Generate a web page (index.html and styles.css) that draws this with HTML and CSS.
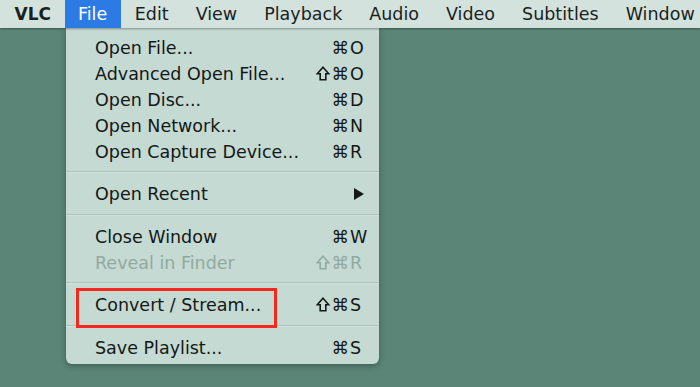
FILE: index.html
```html
<!DOCTYPE html>
<html>
<head>
<meta charset="utf-8">
<link rel="stylesheet" href="styles.css">
</head>
<body>
<div class="screen">
  <div class="menubar">
    <span class="mb-item app">VLC</span>
    <span class="mb-item active">File</span>
    <span class="mb-item">Edit</span>
    <span class="mb-item">View</span>
    <span class="mb-item">Playback</span>
    <span class="mb-item">Audio</span>
    <span class="mb-item">Video</span>
    <span class="mb-item">Subtitles</span>
    <span class="mb-item">Window</span>
  </div>
  <div class="desktop">
    <div class="menu">
      <div class="row"><span class="label">Open File...</span><span class="sc"><span class="mod">⌘</span><span class="key">O</span></span></div>
      <div class="row"><span class="label">Advanced Open File...</span><span class="sc"><span class="mod"><svg class="shift" viewBox="0 0 14 15"><path d="M7 1.2 L12.8 7.8 H9.8 V13.8 H4.2 V7.8 H1.2 Z"/></svg>⌘</span><span class="key">O</span></span></div>
      <div class="row"><span class="label">Open Disc...</span><span class="sc"><span class="mod">⌘</span><span class="key">D</span></span></div>
      <div class="row"><span class="label">Open Network...</span><span class="sc"><span class="mod">⌘</span><span class="key">N</span></span></div>
      <div class="row"><span class="label">Open Capture Device...</span><span class="sc"><span class="mod">⌘</span><span class="key">R</span></span></div>
      <div class="sep"></div>
      <div class="row"><span class="label">Open Recent</span><span class="sc"><span class="mod"></span><span class="key"><svg class="arrow" viewBox="0 0 10 12"><path d="M0 0 L10 6 L0 12 Z"/></svg></span></span></div>
      <div class="sep"></div>
      <div class="row"><span class="label">Close Window</span><span class="sc"><span class="mod">⌘</span><span class="key">W</span></span></div>
      <div class="row disabled"><span class="label">Reveal in Finder</span><span class="sc"><span class="mod"><svg class="shift" viewBox="0 0 14 15"><path d="M7 1.2 L12.8 7.8 H9.8 V13.8 H4.2 V7.8 H1.2 Z"/></svg>⌘</span><span class="key">R</span></span></div>
      <div class="sep"></div>
      <div class="row"><span class="label">Convert / Stream...</span><span class="sc"><span class="mod"><svg class="shift" viewBox="0 0 14 15"><path d="M7 1.2 L12.8 7.8 H9.8 V13.8 H4.2 V7.8 H1.2 Z"/></svg>⌘</span><span class="key">S</span></span></div>
      <div class="sep"></div>
      <div class="row"><span class="label">Save Playlist...</span><span class="sc"><span class="mod">⌘</span><span class="key">S</span></span></div>
      <div class="highlight-box"></div>
    </div>
  </div>
</div>
</body>
</html>
```
FILE: styles.css
```css
html, body {
  margin: 0;
  padding: 0;
}
body {
  width: 700px;
  height: 387px;
  overflow: hidden;
  font-family: "DejaVu Sans", Verdana, sans-serif;
  background: #5a8577;
}
.screen {
  width: 700px;
  height: 387px;
  display: flex;
  flex-direction: column;
}
.menubar {
  height: 28px;
  background: #d3e2dc;
  display: flex;
  align-items: stretch;
  font-size: 17.5px;
  color: #1b1f1d;
  box-shadow: 0 1px 2px rgba(0,0,0,0.35);
  position: relative;
  z-index: 2;
  padding-left: 1px;
  white-space: nowrap;
}
.mb-item {
  display: flex;
  align-items: center;
  padding: 0 13.5px;
}
.mb-item.app {
  font-weight: bold;
  font-size: 17px;
  padding-right: 14px;
}
.mb-item.active {
  background: #2c7be5;
  color: #fff;
  padding: 0 14px 0 13px;
}
.desktop {
  flex: 1;
  background: #5a8577;
  position: relative;
  padding-left: 66px;
}
.menu {
  width: 313px;
  background: #c4dad2;
  border-radius: 0 0 6px 6px;
  box-shadow: 0 2px 6px rgba(0,0,0,0.3);
  padding: 6px 0 4px 0;
  font-size: 17.5px;
  color: #141816;
  position: relative;
  white-space: nowrap;
}
.row {
  height: 26px;
  display: flex;
  align-items: center;
  justify-content: space-between;
  padding: 1px 11px 0 29px;
  box-sizing: border-box;
}
.row.disabled {
  color: #92a9a1;
}
.sc {
  display: flex;
  align-items: center;
}
.mod {
  display: flex;
  align-items: center;
  justify-content: flex-end;
}
.shift {
  width: 14px;
  height: 15px;
  margin-right: 2px;
  margin-top: -1px;
}
.shift path {
  fill: none;
  stroke: currentColor;
  stroke-width: 1.6;
  stroke-linejoin: miter;
}
.key {
  width: 18px;
  text-align: left;
  padding-left: 1px;
  display: flex;
  align-items: center;
}
.arrow {
  width: 10px;
  height: 12px;
  margin-left: 4px;
}
.arrow path {
  fill: #141816;
}
.sep {
  height: 16.5px;
  display: flex;
  align-items: center;
}
.sep::before {
  content: "";
  display: block;
  width: 100%;
  height: 1px;
  background: #aec3bb;
  border-bottom: 1px solid #d0e2db;
}
.highlight-box {
  position: absolute;
  left: 10px;
  top: 260px;
  width: 195px;
  height: 34px;
  border: 3px solid #f2291d;
}
```
